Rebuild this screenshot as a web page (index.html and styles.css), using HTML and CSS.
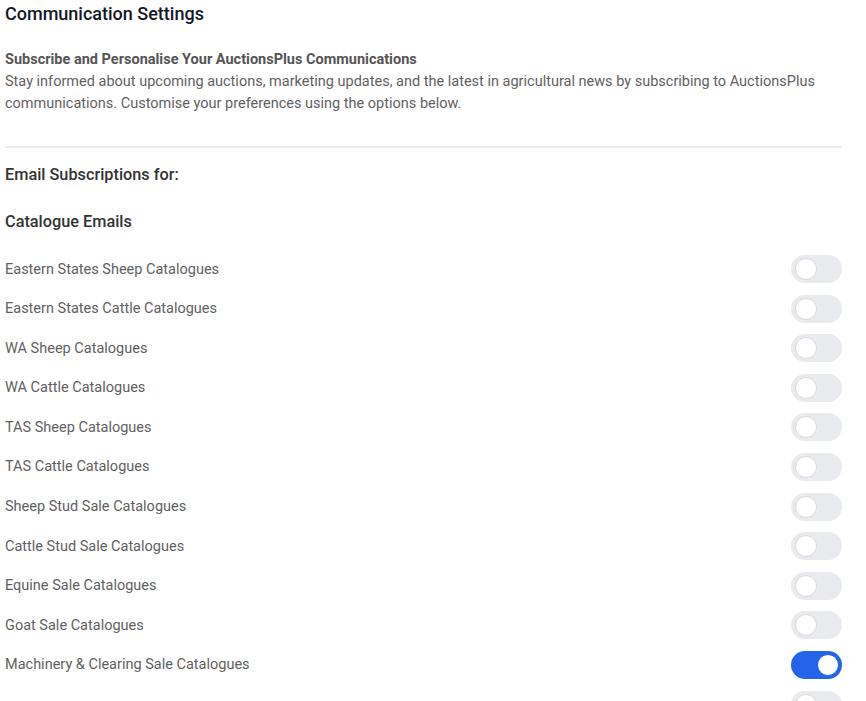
FILE: index.html
```html
<!DOCTYPE html>
<html lang="en">
<head>
<meta charset="utf-8">
<title>Communication Settings</title>
<link rel="stylesheet" href="styles.css">
</head>
<body>
<main class="page">
  <h1 class="title">Communication Settings</h1>
  <section class="intro">
    <h2 class="intro-heading">Subscribe and Personalise Your AuctionsPlus Communications</h2>
    <p class="intro-text">Stay informed about upcoming auctions, marketing updates, and the latest in agricultural news by subscribing to AuctionsPlus communications. Customise your preferences using the options below.</p>
  </section>
  <h3 class="section-title">Email Subscriptions for:</h3>
  <h3 class="group-title">Catalogue Emails</h3>
  <ul class="list">
    <li class="row"><span class="label">Eastern States Sheep Catalogues</span><span class="toggle"><span class="knob"></span></span></li>
    <li class="row"><span class="label">Eastern States Cattle Catalogues</span><span class="toggle"><span class="knob"></span></span></li>
    <li class="row"><span class="label">WA Sheep Catalogues</span><span class="toggle"><span class="knob"></span></span></li>
    <li class="row"><span class="label">WA Cattle Catalogues</span><span class="toggle"><span class="knob"></span></span></li>
    <li class="row"><span class="label">TAS Sheep Catalogues</span><span class="toggle"><span class="knob"></span></span></li>
    <li class="row"><span class="label">TAS Cattle Catalogues</span><span class="toggle"><span class="knob"></span></span></li>
    <li class="row"><span class="label">Sheep Stud Sale Catalogues</span><span class="toggle"><span class="knob"></span></span></li>
    <li class="row"><span class="label">Cattle Stud Sale Catalogues</span><span class="toggle"><span class="knob"></span></span></li>
    <li class="row"><span class="label">Equine Sale Catalogues</span><span class="toggle"><span class="knob"></span></span></li>
    <li class="row"><span class="label">Goat Sale Catalogues</span><span class="toggle"><span class="knob"></span></span></li>
    <li class="row"><span class="label">Machinery &amp; Clearing Sale Catalogues</span><span class="toggle on"><span class="knob"></span></span></li>
    <li class="row"><span class="label"></span><span class="toggle" aria-label="More catalogues"><span class="knob"></span></span></li>
  </ul>
</main>
</body>
</html>
```
FILE: styles.css
```css
html, body {
  margin: 0;
  padding: 0;
  background: #ffffff;
}
body {
  font-family: Roboto, "Liberation Sans", Arial, sans-serif;
  color: #5f5f5f;
  overflow: hidden;
}
.page {
  width: 837px;
  margin-left: 5px;
}
.title {
  margin: 0;
  font-size: 18px;
  line-height: 28px;
  font-weight: 500;
  color: #111827;
}
.intro {
  margin-top: 21px;
  padding-bottom: 31px;
  border-bottom: 2px solid #ececec;
}
.intro-heading {
  margin: 0;
  font-size: 14.5px;
  line-height: 22px;
  font-weight: 700;
  color: #555555;
}
.intro-text {
  margin: 0;
  font-size: 14.5px;
  line-height: 22px;
  color: #5f5f5f;
}
.section-title,
.group-title {
  margin: 0;
  font-size: 16.3px;
  line-height: 24px;
  font-weight: 500;
  color: #333333;
}
.section-title {
  margin-top: 15px;
}
.group-title {
  margin-top: 23px;
}
.list {
  list-style: none;
  margin: 21px 0 0;
  padding: 0;
  display: flex;
  flex-direction: column;
  gap: 11.6px;
}
.row {
  display: flex;
  align-items: center;
  justify-content: space-between;
  height: 28px;
}
.label {
  font-size: 14.5px;
  color: #5f5f5f;
}
.toggle {
  position: relative;
  width: 51px;
  height: 28px;
  border-radius: 14px;
  background: #e8eaed;
  flex: none;
}
.knob {
  position: absolute;
  top: 3px;
  left: 4px;
  width: 20px;
  height: 20px;
  border-radius: 50%;
  background: #ffffff;
  border: 1px solid #d6d9de;
}
.toggle.on {
  background: #2563eb;
}
.toggle.on .knob {
  left: auto;
  right: 3px;
  border-color: #2563eb;
}
```
